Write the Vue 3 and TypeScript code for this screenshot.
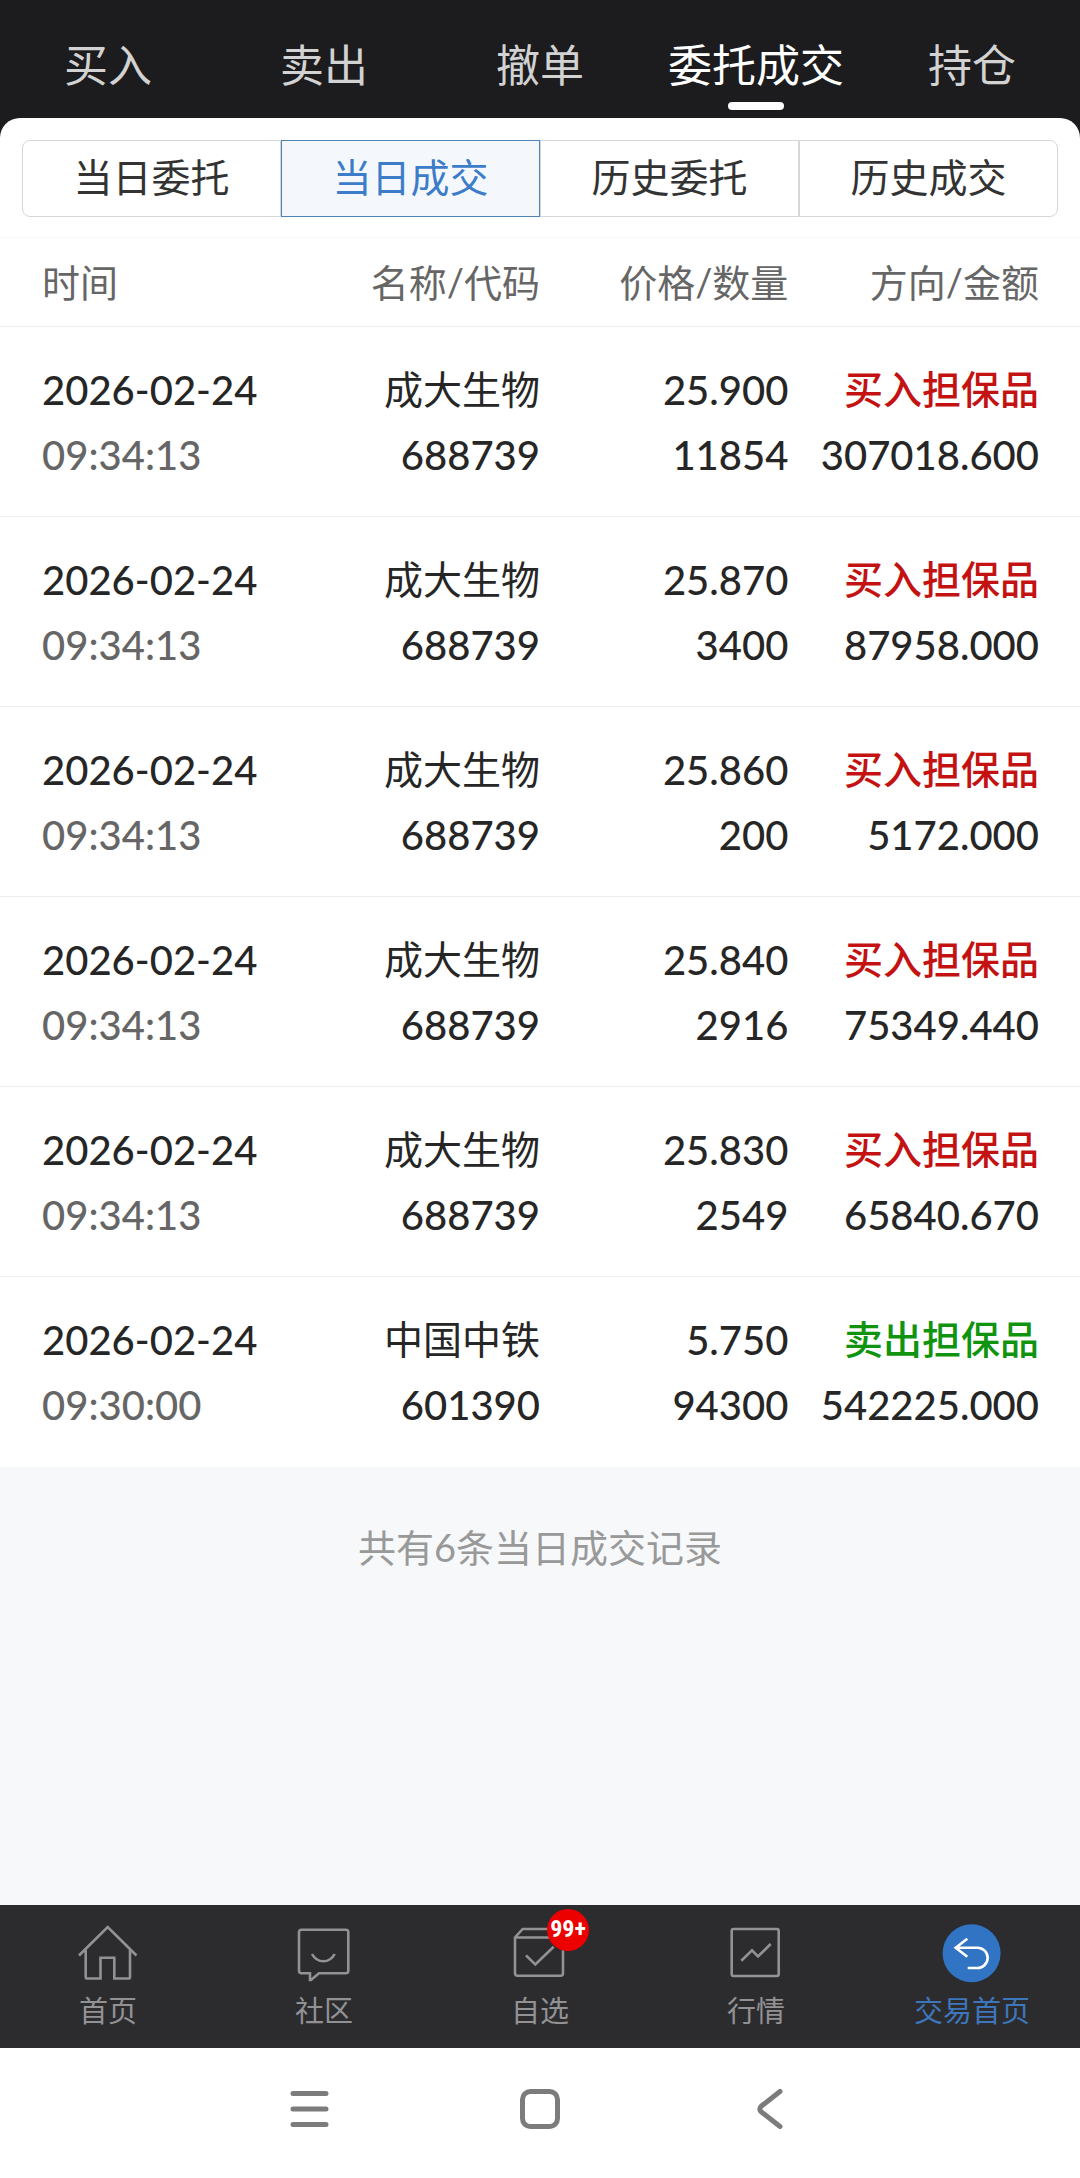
<script setup lang="ts">
import { ref } from 'vue'

interface Deal {
  date: string
  time: string
  name: string
  code: string
  price: string
  volume: string
  side: 'buy' | 'sell'
  amount: string
}

const tabs: string[] = ['买入', '卖出', '撤单', '委托成交', '持仓']
const activeTab = ref('委托成交')

const ranges: string[] = ['当日委托', '当日成交', '历史委托', '历史成交']
const activeRange = ref('当日成交')

const sideLabel: Record<Deal['side'], string> = {
  buy: '买入担保品',
  sell: '卖出担保品',
}

const deals: Deal[] = [
  { date: '2026-02-24', time: '09:34:13', name: '成大生物', code: '688739', price: '25.900', volume: '11854', side: 'buy', amount: '307018.600' },
  { date: '2026-02-24', time: '09:34:13', name: '成大生物', code: '688739', price: '25.870', volume: '3400', side: 'buy', amount: '87958.000' },
  { date: '2026-02-24', time: '09:34:13', name: '成大生物', code: '688739', price: '25.860', volume: '200', side: 'buy', amount: '5172.000' },
  { date: '2026-02-24', time: '09:34:13', name: '成大生物', code: '688739', price: '25.840', volume: '2916', side: 'buy', amount: '75349.440' },
  { date: '2026-02-24', time: '09:34:13', name: '成大生物', code: '688739', price: '25.830', volume: '2549', side: 'buy', amount: '65840.670' },
  { date: '2026-02-24', time: '09:30:00', name: '中国中铁', code: '601390', price: '5.750', volume: '94300', side: 'sell', amount: '542225.000' },
]
</script>

<template>
  <div class="page">
    <header class="top">
      <nav class="tabs">
        <button
          v-for="tab in tabs"
          :key="tab"
          type="button"
          class="tab"
          :class="{ active: tab === activeTab }"
          @click="activeTab = tab"
        >
          {{ tab }}
        </button>
      </nav>
    </header>

    <main class="content">
      <section class="sheet">
        <div class="segment">
          <button
            v-for="range in ranges"
            :key="range"
            type="button"
            class="segment-item"
            :class="{ active: range === activeRange }"
            @click="activeRange = range"
          >
            {{ range }}
          </button>
        </div>

        <table class="deals">
          <colgroup>
            <col class="col-edge" />
            <col class="col-mid" />
            <col class="col-mid" />
            <col class="col-edge" />
          </colgroup>
          <thead>
            <tr>
              <th scope="col">时间</th>
              <th scope="col">名称/代码</th>
              <th scope="col">价格/数量</th>
              <th scope="col">方向/金额</th>
            </tr>
          </thead>
          <tbody>
            <tr v-for="(deal, i) in deals" :key="i">
              <td>
                <div class="num">{{ deal.date }}</div>
                <div class="num muted">{{ deal.time }}</div>
              </td>
              <td>
                <div class="word">{{ deal.name }}</div>
                <div class="num">{{ deal.code }}</div>
              </td>
              <td>
                <div class="num">{{ deal.price }}</div>
                <div class="num">{{ deal.volume }}</div>
              </td>
              <td>
                <div class="word" :class="deal.side">{{ sideLabel[deal.side] }}</div>
                <div class="num">{{ deal.amount }}</div>
              </td>
            </tr>
          </tbody>
        </table>
      </section>

      <p class="summary">共有{{ deals.length }}条当日成交记录</p>
    </main>

    <nav class="dock">
      <a href="#home" class="dock-item">
        <svg class="dock-icon" viewBox="0 0 60 60" aria-hidden="true">
          <path d="M1 32.5 29.7 4 58.5 32.5M7.7 27V54.5Q7.7 55.5 8.7 55.5H22.5V34.8H36.3V55.5H51Q52 55.5 52 54.5V27" />
        </svg>
        <span>首页</span>
      </a>
      <a href="#community" class="dock-item">
        <svg class="dock-icon" viewBox="0 0 60 60" aria-hidden="true">
          <path d="M16 50.3H7.5Q5 50.3 5 47.8V9.2Q5 6.7 7.5 6.7H51.8Q54.3 6.7 54.3 9.2V47.8Q54.3 50.3 51.8 50.3H25L17 57H16Z" />
          <path d="M18 31Q22 38.3 29.4 38.3T40.7 31" />
        </svg>
        <span>社区</span>
      </a>
      <a href="#watchlist" class="dock-item">
        <span class="icon-wrap">
          <svg class="dock-icon" viewBox="0 0 60 60" aria-hidden="true">
            <path d="M5 14.5H53V50.2Q53 52.7 50.5 52.7H7.5Q5 52.7 5 50.2V14.5L12.7 6H46L53 14.5" />
            <path d="M16 32.3 25.3 41.5 43.7 23.7" />
          </svg>
          <span class="badge">99+</span>
        </span>
        <span>自选</span>
      </a>
      <a href="#quotes" class="dock-item">
        <svg class="dock-icon" viewBox="0 0 60 60" aria-hidden="true">
          <rect x="5.7" y="6" width="47" height="47" rx="2" />
          <path d="M15.3 37.7 26 27.3 32 33.5 44.7 21" />
        </svg>
        <span>行情</span>
      </a>
      <a href="#trade" class="dock-item current">
        <svg class="dock-icon" viewBox="0 0 60 60" aria-hidden="true">
          <circle class="disc" cx="29.6" cy="30.3" r="29" />
          <path class="arrow" d="M25.3 15.7 13.7 24.7 25.3 33.7M13.7 24.7H35.5A10.1 10.1 0 0 1 35.5 45H25.7" />
        </svg>
        <span>交易首页</span>
      </a>
    </nav>

    <div class="system">
      <button type="button" class="system-key" aria-label="菜单">
        <svg viewBox="0 0 40 40"><path d="M3 4.5H36M3 20H36M3 35.5H36" /></svg>
      </button>
      <button type="button" class="system-key" aria-label="主屏幕">
        <svg viewBox="0 0 40 40"><rect x="2.5" y="2.5" width="35" height="35" rx="8" /></svg>
      </button>
      <button type="button" class="system-key" aria-label="返回">
        <svg viewBox="0 0 40 40"><path d="M30 2.5 11.5 17Q8 20 11.5 23L30 37.5" /></svg>
      </button>
    </div>
  </div>
</template>

<style>
body {
  margin: 0;
}
</style>

<style scoped>
.page {
  display: flex;
  flex-direction: column;
  min-height: 100vh;
  background: #f6f8fa;
  color: #262626;
  font-family: Lato, "Noto Sans CJK SC", sans-serif;
}

button {
  margin: 0;
  padding: 0;
  border: 0;
  background: none;
  color: inherit;
  font: inherit;
}

/* top tabs */
.top {
  padding-bottom: 20px;
  margin-bottom: -20px;
  background: #1c1c1e;
}

.tabs {
  display: flex;
}

.tab {
  position: relative;
  flex: 1;
  padding: 33px 0 21px;
  color: #d2d2d2;
  font-size: 44px;
  line-height: 64px;
  white-space: nowrap;
}

.tab.active {
  color: #fff;
}

.tab.active::after {
  content: "";
  position: absolute;
  left: 50%;
  bottom: 8px;
  width: 56px;
  height: 8px;
  margin-left: -28px;
  border-radius: 4px;
  background: #fff;
}

/* white sheet */
.content {
  flex: 1;
}

.sheet {
  border-radius: 20px 20px 0 0;
  background: #fff;
}

.segment {
  display: flex;
  padding: 22px 22px 20px;
}

.segment-item {
  flex: 1;
  padding-bottom: 3px;
  border: 1px solid #d5d7d9;
  color: #333;
  font-size: 39px;
  line-height: 72px;
}

.segment-item:first-child {
  border-radius: 8px 0 0 8px;
}

.segment-item:last-child {
  border-radius: 0 8px 8px 0;
}

.segment-item.active {
  border-color: #4f82b5;
  background: #f4f8fd;
  color: #3d7cc9;
}

/* deal list */
.deals {
  width: 100%;
  border-collapse: collapse;
  table-layout: fixed;
}

.col-edge {
  width: 27%;
}

.col-mid {
  width: 23%;
}

th,
td {
  padding: 0;
  text-align: right;
  white-space: nowrap;
}

th:first-child,
td:first-child {
  padding-left: 42px;
  text-align: left;
}

th:last-child,
td:last-child {
  padding-right: 41px;
}

th {
  height: 84px;
  padding-bottom: 4px;
  border-top: 1px solid #f7f7f7;
  border-bottom: 1px solid #ededed;
  color: #666;
  font-size: 38px;
  font-weight: 400;
}

td {
  padding-top: 30px;
  padding-bottom: 29px;
  border-bottom: 1px solid #ededed;
}

tr:last-child td {
  border-bottom-color: #fff;
}

.num {
  height: 65px;
  font-size: 40px;
  font-weight: 500;
  line-height: 67px;
}

.word {
  height: 65px;
  font-size: 39px;
  line-height: 65px;
}

.muted {
  color: #666;
}

.buy {
  color: #c41212;
  font-weight: 500;
}

.sell {
  color: #109410;
  font-weight: 500;
}

.summary {
  margin: 0;
  padding: 50px 0;
  color: #999;
  font-size: 38px;
  line-height: 60px;
  text-align: center;
}

/* app navigation */
.dock {
  display: flex;
  background: #2c2c2e;
}

.dock-item {
  display: flex;
  flex: 1;
  flex-direction: column;
  align-items: center;
  gap: 8px;
  padding: 18px 0 17px;
  color: #929295;
  font-size: 29px;
  line-height: 40px;
  text-decoration: none;
}

.dock-item.current {
  color: #3d76ba;
}

.dock-icon {
  display: block;
  width: 60px;
  height: 60px;
  fill: none;
  stroke: currentColor;
  stroke-width: 2.6;
}

.disc {
  fill: #3174c3;
  stroke: none;
}

.arrow {
  stroke: #fff;
}

.icon-wrap {
  position: relative;
}

.badge {
  position: absolute;
  top: -14px;
  left: 37px;
  width: 42px;
  height: 42px;
  border-radius: 50%;
  background: #ec0000;
  color: #fff;
  font-family: "Liberation Sans Narrow", "Roboto Condensed", Roboto, sans-serif;
  font-size: 24px;
  font-weight: 700;
  line-height: 40px;
  text-align: center;
}

/* device keys */
.system {
  display: flex;
  justify-content: center;
  gap: 190px;
  padding: 41px 0 49px;
  background: #fff;
}

.system-key {
  width: 40px;
  height: 40px;
}

.system-key svg {
  display: block;
  width: 40px;
  height: 40px;
  fill: none;
  stroke: #7c7c7c;
  stroke-width: 5;
  stroke-linecap: round;
}
</style>
